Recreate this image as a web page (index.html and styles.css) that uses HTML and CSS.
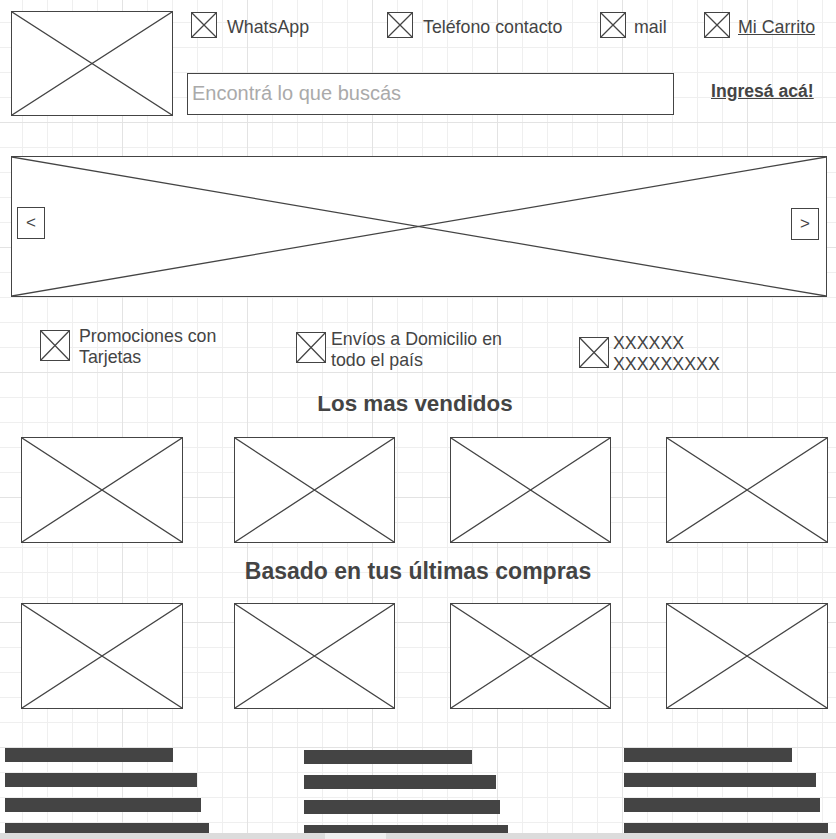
FILE: index.html
```html
<!DOCTYPE html>
<html lang="es">
<head>
<meta charset="utf-8">
<title>Tienda - wireframe</title>
<link rel="stylesheet" href="styles.css">
</head>
<body>
<header class="top">
  <svg class="ph logo" viewBox="0 0 100 100" preserveAspectRatio="none"><path d="M0 0L100 100M100 0L0 100" vector-effect="non-scaling-stroke"/></svg>
  <div class="top-right">
    <nav class="contacts">
      <a class="contact"><svg class="ph ico" viewBox="0 0 100 100" preserveAspectRatio="none"><path d="M0 0L100 100M100 0L0 100" vector-effect="non-scaling-stroke"/></svg><span>WhatsApp</span></a>
      <a class="contact"><svg class="ph ico" viewBox="0 0 100 100" preserveAspectRatio="none"><path d="M0 0L100 100M100 0L0 100" vector-effect="non-scaling-stroke"/></svg><span>Teléfono contacto</span></a>
      <a class="contact contact--tight"><svg class="ph ico" viewBox="0 0 100 100" preserveAspectRatio="none"><path d="M0 0L100 100M100 0L0 100" vector-effect="non-scaling-stroke"/></svg><span>mail</span></a>
      <a class="contact contact--tight"><svg class="ph ico" viewBox="0 0 100 100" preserveAspectRatio="none"><path d="M0 0L100 100M100 0L0 100" vector-effect="non-scaling-stroke"/></svg><span class="u">Mi Carrito</span></a>
    </nav>
    <div class="search-row">
      <div class="search">Encontrá lo que buscás</div>
      <a class="login">Ingresá acá!</a>
    </div>
  </div>
</header>

<section class="carousel">
  <svg class="carousel-bg" viewBox="0 0 100 100" preserveAspectRatio="none"><path d="M0 0L100 100M100 0L0 100" vector-effect="non-scaling-stroke"/></svg>
  <button class="arrow">&lt;</button>
  <button class="arrow arrow--right">&gt;</button>
</section>

<section class="features">
  <div class="feature f1">
    <svg class="ph ico-lg" viewBox="0 0 100 100" preserveAspectRatio="none"><path d="M0 0L100 100M100 0L0 100" vector-effect="non-scaling-stroke"/></svg>
    <p>Promociones con<br>Tarjetas</p>
  </div>
  <div class="feature f2">
    <svg class="ph ico-lg" viewBox="0 0 100 100" preserveAspectRatio="none"><path d="M0 0L100 100M100 0L0 100" vector-effect="non-scaling-stroke"/></svg>
    <p>Envíos a Domicilio en<br>todo el país</p>
  </div>
  <div class="feature f3">
    <svg class="ph ico-lg" viewBox="0 0 100 100" preserveAspectRatio="none"><path d="M0 0L100 100M100 0L0 100" vector-effect="non-scaling-stroke"/></svg>
    <p>XXXXXX<br>XXXXXXXXX</p>
  </div>
</section>

<h2 class="title">Los mas vendidos</h2>
<section class="products">
  <svg class="ph prod" viewBox="0 0 100 100" preserveAspectRatio="none"><path d="M0 0L100 100M100 0L0 100" vector-effect="non-scaling-stroke"/></svg>
  <svg class="ph prod" viewBox="0 0 100 100" preserveAspectRatio="none"><path d="M0 0L100 100M100 0L0 100" vector-effect="non-scaling-stroke"/></svg>
  <svg class="ph prod" viewBox="0 0 100 100" preserveAspectRatio="none"><path d="M0 0L100 100M100 0L0 100" vector-effect="non-scaling-stroke"/></svg>
  <svg class="ph prod" viewBox="0 0 100 100" preserveAspectRatio="none"><path d="M0 0L100 100M100 0L0 100" vector-effect="non-scaling-stroke"/></svg>
</section>

<h2 class="title title--2">Basado en tus últimas compras</h2>
<section class="products products--2">
  <svg class="ph prod" viewBox="0 0 100 100" preserveAspectRatio="none"><path d="M0 0L100 100M100 0L0 100" vector-effect="non-scaling-stroke"/></svg>
  <svg class="ph prod" viewBox="0 0 100 100" preserveAspectRatio="none"><path d="M0 0L100 100M100 0L0 100" vector-effect="non-scaling-stroke"/></svg>
  <svg class="ph prod" viewBox="0 0 100 100" preserveAspectRatio="none"><path d="M0 0L100 100M100 0L0 100" vector-effect="non-scaling-stroke"/></svg>
  <svg class="ph prod" viewBox="0 0 100 100" preserveAspectRatio="none"><path d="M0 0L100 100M100 0L0 100" vector-effect="non-scaling-stroke"/></svg>
</section>

<footer class="footer">
  <div class="fcol">
    <span class="bar b1"></span><span class="bar b2"></span><span class="bar b3"></span><span class="bar b4"></span>
  </div>
  <div class="fcol fcol--2">
    <span class="bar b1"></span><span class="bar b2"></span><span class="bar b3"></span><span class="bar b4"></span>
  </div>
  <div class="fcol">
    <span class="bar b1"></span><span class="bar b2"></span><span class="bar b3"></span><span class="bar b4"></span>
  </div>
</footer>

<div class="hscroll"><span class="hscroll-thumb"></span></div>
</body>
</html>
```

FILE: styles.css
```css
html, body {
  margin: 0;
  padding: 0;
}

body {
  height: 839px;
  overflow: hidden;
  font-family: "Liberation Sans", Arial, sans-serif;
  color: #444;
  background-color: #fff;
  background-image:
    linear-gradient(to right, #e3e3e3 1px, transparent 1px),
    linear-gradient(to bottom, #e3e3e3 1px, transparent 1px),
    linear-gradient(to right, #efefef 1px, transparent 1px),
    linear-gradient(to bottom, #efefef 1px, transparent 1px);
  background-size: 125px 125px, 125px 125px, 25px 25px, 25px 25px;
  background-position: 122px 122px, 122px 122px, 22px 22px, 22px 22px;
}

/* placeholder boxes */
.ph {
  display: block;
  box-sizing: border-box;
  background: #fff;
  border: 1px solid #444;
}
.ph path,
.carousel-bg path {
  stroke: #444;
  stroke-width: 1.3;
  fill: none;
}

/* header */
.top {
  display: grid;
  grid-template-columns: 162px 1fr;
  column-gap: 14px;
  padding: 11px 0 0 11px;
}
.logo {
  width: 162px;
  height: 105px;
}
.top-right {
  display: flex;
  flex-direction: column;
}
.contacts {
  display: grid;
  grid-template-columns: 196px 213px 104px auto;
  padding-left: 4px;
  margin-top: 1px;
  height: 26px;
}
.contact {
  display: flex;
  align-items: center;
  gap: 10px;
  font-size: 17.8px;
  color: #444;
}
.contact span {
  padding-top: 5px;
}
.contact--tight {
  gap: 8px;
}
.ico {
  width: 26px;
  height: 26px;
  flex: none;
}
.u {
  text-decoration: underline;
}
.search-row {
  display: flex;
  align-items: center;
  margin-top: 35px;
}
.search {
  box-sizing: border-box;
  width: 487px;
  height: 42px;
  border: 1px solid #444;
  background: #fff;
  padding: 0 4px 2px;
  display: flex;
  align-items: center;
  font-size: 20px;
  color: #aaa;
}
.login {
  margin-left: 37px;
  margin-top: -6px;
  font-size: 17.6px;
  font-weight: bold;
  text-decoration: underline;
  color: #444;
}

/* carousel */
.carousel {
  position: relative;
  box-sizing: border-box;
  width: 816px;
  height: 141px;
  margin: 40px 0 0 11px;
  border: 1px solid #444;
  background: #fff;
  display: flex;
  align-items: center;
  justify-content: space-between;
  padding: 0 7px 8px 5px;
}
.carousel-bg {
  position: absolute;
  inset: 0;
  width: 100%;
  height: 100%;
}
.arrow {
  position: relative;
  box-sizing: border-box;
  width: 28px;
  height: 32px;
  border: 1px solid #444;
  background: #fff;
  font-family: "Liberation Sans", Arial, sans-serif;
  font-size: 17px;
  color: #444;
  padding: 0;
}
.arrow--right {
  margin-top: 2px;
}

/* features */
.features {
  display: grid;
  grid-template-columns: 256px 283px auto;
  padding-left: 40px;
  margin-top: 33px;
  height: 59px;
}
.feature {
  display: flex;
  align-items: flex-start;
  gap: 5px;
}
.feature p {
  margin: -4px 0 0;
  font-size: 17.8px;
  line-height: 21px;
}
.f1 { gap: 9px; }
.f2 { margin-top: 2px; }
.f2 p { margin-top: -3px; }
.f3 { margin-top: 7px; gap: 4px; }
.ico-lg {
  width: 30px;
  height: 31px;
  flex: none;
}

/* sections */
.title {
  margin: 0;
  height: 30px;
  line-height: 30px;
  text-align: center;
  font-size: 22.4px;
  font-weight: bold;
  color: #444;
  padding-right: 6px;
}
.title--2 {
  margin-top: 13px;
  font-size: 23px;
  padding-right: 0;
}
.products {
  display: grid;
  grid-template-columns: 162px 161px 161px 162px;
  column-gap: 51px;
  padding-left: 21px;
  margin-top: 18px;
}
.products--2 {
  margin-top: 17px;
}
.products .prod:nth-child(n+3) {
  margin-left: 4px;
}
.products .prod:nth-child(4) {
  margin-left: 8px;
}
.prod {
  width: 100%;
  height: 106px;
}

/* footer */
.footer {
  display: grid;
  grid-template-columns: 299px 320px auto;
  padding-left: 5px;
  margin-top: 39px;
}
.fcol {
  display: flex;
  flex-direction: column;
  gap: 11px;
}
.fcol--2 {
  margin-top: 2px;
}
.bar {
  display: block;
  height: 14px;
  background: #444;
}
.b1 { width: 168px; }
.b2 { width: 192px; }
.b3 { width: 196px; }
.b4 { width: 204px; }

/* horizontal scrollbar strip */
.hscroll {
  position: fixed;
  left: 0;
  right: 0;
  bottom: 0;
  height: 6px;
  background: #dcdcdc;
}
.hscroll-thumb {
  position: absolute;
  left: 325px;
  top: 0;
  width: 61px;
  height: 6px;
  background: #efefef;
}
```
